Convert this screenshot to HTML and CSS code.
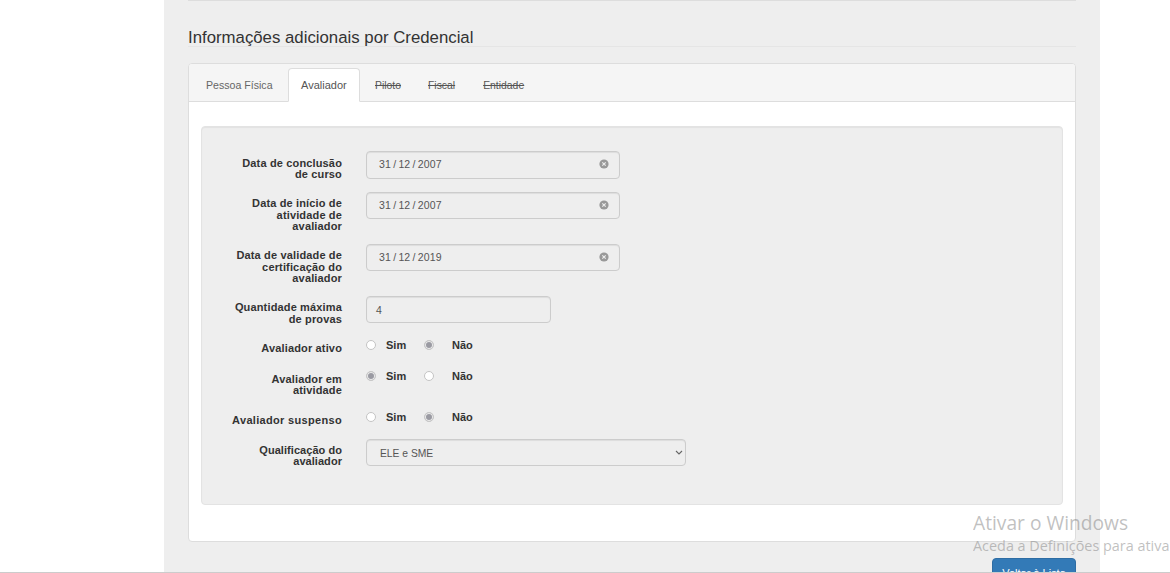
FILE: index.html
```html
<!DOCTYPE html>
<html lang="pt">
<head>
<meta charset="utf-8">
<title>Informações adicionais por Credencial</title>
<link rel="stylesheet" href="styles.css">
</head>
<body>
<main class="page">
  <hr class="top-rule">
  <h4 class="section-title">Informações adicionais por Credencial</h4>
  <section class="panel">
    <nav class="tabs">
      <a class="tab tab-first">Pessoa Física</a>
      <a class="tab tab-active">Avaliador</a>
      <a class="tab tab-off">Piloto</a>
      <a class="tab tab-off">Fiscal</a>
      <a class="tab tab-off">Entidade</a>
    </nav>
    <div class="panel-body">
      <form class="well">
        <div class="row row-date">
          <label class="lbl lbl-two">Data de conclusão<br>de curso</label>
          <div class="field date"><span class="date-text">31 / 12 / 2007</span>
            <svg class="clear" viewBox="0 0 10 10"><circle cx="5" cy="5" r="4.6"/><path d="M3.3 3.3l3.4 3.4M6.7 3.3l-3.4 3.4"/></svg></div>
        </div>
        <div class="row row-tall">
          <label class="lbl">Data de início de<br>atividade de<br>avaliador</label>
          <div class="field date short"><span class="date-text">31 / 12 / 2007</span>
            <svg class="clear" viewBox="0 0 10 10"><circle cx="5" cy="5" r="4.6"/><path d="M3.3 3.3l3.4 3.4M6.7 3.3l-3.4 3.4"/></svg></div>
        </div>
        <div class="row row-tall">
          <label class="lbl">Data de validade de<br>certificação do<br>avaliador</label>
          <div class="field date short"><span class="date-text">31 / 12 / 2019</span>
            <svg class="clear" viewBox="0 0 10 10"><circle cx="5" cy="5" r="4.6"/><path d="M3.3 3.3l3.4 3.4M6.7 3.3l-3.4 3.4"/></svg></div>
        </div>
        <div class="row row-qty">
          <label class="lbl lbl-qty">Quantidade máxima<br>de provas</label>
          <div class="field qty">4</div>
        </div>
        <div class="row row-radio">
          <label class="lbl lbl-radio">Avaliador ativo</label>
          <div class="radios">
            <span class="opt"><i class="radio"></i><b>Sim</b></span>
            <span class="opt"><i class="radio on"></i><b>Não</b></span>
          </div>
        </div>
        <div class="row row-radio2">
          <label class="lbl lbl-two">Avaliador em<br>atividade</label>
          <div class="radios">
            <span class="opt"><i class="radio on"></i><b>Sim</b></span>
            <span class="opt"><i class="radio"></i><b>Não</b></span>
          </div>
        </div>
        <div class="row row-radio">
          <label class="lbl lbl-radio lbl-wide">Avaliador suspenso</label>
          <div class="radios">
            <span class="opt"><i class="radio"></i><b>Sim</b></span>
            <span class="opt"><i class="radio on"></i><b>Não</b></span>
          </div>
        </div>
        <div class="row row-last">
          <label class="lbl lbl-select">Qualificação do<br>avaliador</label>
          <div class="select-wrap">
            <select class="field select"><option>ELE e SME</option></select>
            <svg class="chevron" viewBox="0 0 8 5"><path d="M1 1l3 3 3-3"/></svg>
          </div>
        </div>
      </form>
    </div>
  </section>
  <div class="actions"><a class="btn">Voltar à Lista</a></div>
</main>
<div class="watermark">
  <div class="wm-title">Ativar o Windows</div>
  <div class="wm-sub">Aceda a Definições para ativar o Windows.</div>
</div>
<div class="bottom-line"></div>
</body>
</html>
```

FILE: styles.css
```css
* { box-sizing: border-box; }
html, body { margin: 0; height: 573px; overflow: hidden; background: #fff; }
body { font-family: "Liberation Sans", Arial, sans-serif; color: #333; position: relative; }

.page { margin-left: 164px; width: 936px; height: 573px; padding: 0 24px; background: #eee; }
.top-rule { margin: 0; border: 0; border-top: 1px solid #ddd; height: 0; }

.section-title {
  margin: 28px 0 16px; height: 18px; padding-bottom: 0; font-size: 16.8px; line-height: 18px;
  font-weight: 400; color: #333; border-bottom: 1px solid #e5e5e5; white-space: nowrap;
}

.panel { height: 479px; background: #fff; border: 1px solid #ddd; border-radius: 4px; }

.tabs { display: flex; height: 38px; padding: 4px 0 0 5px; background: #f5f5f5; border-bottom: 1px solid #ddd; border-radius: 3px 3px 0 0; }
.tab { height: 34px; padding: 0 12px; font-size: 10.6px; line-height: 34px; color: #555; white-space: nowrap; }
.tab-first { width: 93px; margin-right: 1px; color: #666; }
.tab-active { width: 72px; font-size: 11px; background: #fff; border: 1px solid #ddd; border-bottom-color: #fff; border-radius: 4px 4px 0 0; line-height: 32px; margin-right: 2px; }
.tab-off { font-size: 10.4px; line-height: 35px; text-decoration: line-through; padding: 0 13px; }
.tab-off + .tab-off { padding: 0 14px; }

.panel-body { padding: 24px 12px 0; }

.well { height: 379px; padding: 24px 0 0; background: #eee; border: 1px solid #e3e3e3; border-radius: 4px; box-shadow: inset 0 1px 1px rgba(0,0,0,.05); }

.row { display: flex; gap: 24px; }
.row-date { height: 41px; }
.row-tall { height: 52px; }
.row-qty { height: 40px; }
.row-radio { height: 31px; }
.row-radio2 { height: 41px; }
.row-last { height: 27px; }

.lbl { flex: 0 0 140px; padding-top: 6px; text-align: right; font-size: 11px; line-height: 11.5px; font-weight: 700; letter-spacing: 0.15px; color: #333; }
.lbl-two { padding-top: 6.5px; }
.lbl-qty { padding-top: 6px; }
.lbl-radio { padding-top: 7px; }
.lbl-wide { letter-spacing: 0.32px; }
.lbl-select { padding-top: 5.5px; letter-spacing: 0.05px; }

.field { height: 28px; background: #eee; border: 1px solid #ccc; border-radius: 4px; box-shadow: inset 0 1px 1px rgba(0,0,0,.075); font-size: 10.5px; color: #555; font-family: inherit; }
.date { width: 254px; padding: 0 10px 2px 12px; display: flex; align-items: center; justify-content: space-between; }
.date.short { height: 27px; }
.date-text { letter-spacing: 0.15px; word-spacing: -0.9px; }
.clear { width: 10px; height: 10px; }
.clear circle { fill: #999; }
.clear path { stroke: #eee; stroke-width: 1.1; fill: none; }

.qty { width: 185px; height: 27px; padding: 1px 9px 0; line-height: 25px; }

.radios { display: flex; height: 18px; padding-top: 3px; }
.opt { display: flex; align-items: flex-start; width: 58px; }
.opt b { margin-left: 10px; font-size: 11px; line-height: 12px; color: #333; }
.opt:nth-child(2) b { margin-left: 18px; }
.radio { flex: none; margin-top: 1px; width: 10px; height: 10px; border: 1px solid #c4c4c4; border-radius: 50%; background: #fff; }
.radio.on { background: #9a9aa2; border-color: #c8c8c8; box-shadow: inset 0 0 0 1px #eee; }

.select-wrap { position: relative; width: 320px; height: 27px; }
.select { display: block; width: 100%; height: 27px; padding: 2px 0 0 13px; font-size: 10.3px; appearance: none; -webkit-appearance: none; }
.chevron { position: absolute; right: 3px; top: 11px; width: 8px; height: 5px; pointer-events: none; }
.chevron path { fill: none; stroke: #666; stroke-width: 1.1; }

.actions { display: flex; justify-content: flex-end; margin-top: 16px; }
.btn { display: block; width: 84px; height: 34px; padding-top: 8px; text-align: center; font-size: 11px; line-height: 12px; color: #fff; background: #337ab7; border: 1px solid #2e6da4; border-radius: 4px; }

.watermark { position: absolute; left: 973px; top: 510px; width: 197px; overflow: hidden; white-space: nowrap; color: rgba(130,130,130,.5); font-family: "Open Sans", sans-serif; pointer-events: none; }
.wm-title { font-size: 19.2px; line-height: 26px; }
.wm-sub { font-size: 14.4px; line-height: 20px; }

.bottom-line { position: absolute; left: 0; right: 0; top: 572px; height: 1px; background: #ccc; }
```
